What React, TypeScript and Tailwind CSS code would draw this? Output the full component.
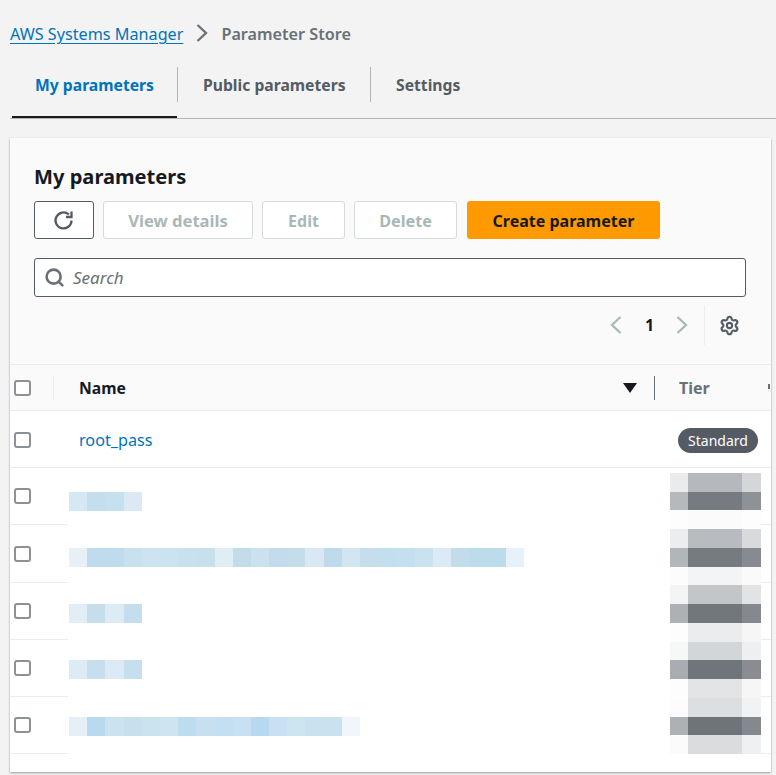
import { Search, Settings } from "lucide-react";

const font = "font-['Noto_Sans',sans-serif]";

// blurred name cells, one colour per mosaic block
const blurredRows = [
  { height: 57, box: 20, top: 24, cells: ["#d6e8f3", "#c4deee", "#c5e0ee", "#dce9f5"] },
  {
    height: 58,
    box: 21,
    top: 23,
    cells: [
      "#e6f0f5", "#c0dcec", "#bfdcee", "#c9e1ee", "#cde3f0", "#cbe2ef", "#c9e0ee", "#c8dfec",
      "#e0edf5", "#c2dcea", "#cbe1ee", "#c2dcec", "#c3ddeb", "#d9e8f2", "#bfdaeb", "#d2e5f1",
      "#c6deec", "#c2dfee", "#c4e0ef", "#c9e2f0", "#dbeaf4", "#c2dcea", "#bcdcec", "#bcdcec", "#e6f1f9",
    ],
  },
  { height: 57, box: 20, top: 21, cells: ["#e1eef7", "#c6deeb", "#dcebf4", "#c5deed"] },
  { height: 57, box: 20, top: 20, cells: ["#dcebf4", "#c6deee", "#dbeaf4", "#c5dfef"] },
  {
    height: 57,
    box: 20,
    top: 20,
    cells: [
      "#e6eff6", "#b9d9ee", "#cbe3f1", "#c6e0ee", "#cbe2ef", "#cfe4f1", "#bedcf0", "#c6e0f2",
      "#c4dff1", "#c8e1f2", "#b8d8f0", "#c7e1f3", "#cde4f1", "#c9e1f0", "#c9e2ef", "#f1f6fb",
    ],
  },
];

// blurred tier column: left, middle, right block per band
const tierBands = [
  ["#e9ebec", "#b5b9bd", "#d4d6d8", 19],
  ["#b4b9bb", "#767b82", "#8e9195", 18],
  ["#fdfdfd", "#fbfbfc", "#fdfdfd", 19],
  ["#ebedee", "#b8bcc0", "#d8dadc", 19],
  ["#b1b6b9", "#767b82", "#878a90", 19],
  ["#fcfcfd", "#f3f4f5", "#fafafb", 18],
  ["#f3f4f4", "#c3c6c8", "#e2e3e5", 19],
  ["#adb1b4", "#72777e", "#85888e", 19],
  ["#fdfdfd", "#ebecee", "#f6f6f7", 19],
  ["#f6f7f7", "#d3d6d8", "#eeeff1", 18],
  ["#a9adb2", "#70757c", "#8a8c91", 19],
  ["#fdfdfd", "#e2e4e6", "#f6f6f7", 19],
  ["#fcfcfc", "#dcdfe1", "#f1f2f3", 19],
  ["#aeb1b4", "#6f747b", "#85888d", 18],
  ["#fbfbfb", "#dadcde", "#eff0f2", 19],
] as const;

function Checkbox() {
  return <span className="block w-[17px] h-[16px] rounded-[3px] border-2 border-[#8d9096] bg-white" />;
}

function Chevron({ left, className }: { left?: boolean; className: string }) {
  return (
    <svg width="12" height="18" viewBox="0 0 12 18" fill="none" stroke="currentColor" strokeWidth="2.3" className={className}>
      <polyline points={left ? "10.5,1 2,9 10.5,17" : "1.5,1 10,9 1.5,17"} />
    </svg>
  );
}

function DisabledButton({ label, width, size }: { label: string; width: string; size: string }) {
  return (
    <button className={`${width} ${size} h-[38px] rounded-[3px] border border-[#d5dbdb] bg-white text-[#aab7b8] font-bold`}>
      {label}
    </button>
  );
}

export default function App() {
  return (
    <div className={`${font} w-[776px] h-[775px] overflow-hidden bg-[#f3f3f3] text-[16px]`}>
      {/* Breadcrumb */}
      <div className="h-[67px] pl-[10px] pt-[22px] flex items-start text-[16.2px]">
        <a className="text-[#0073bb] underline underline-offset-[3px] leading-[24px]">AWS Systems Manager</a>
        <Chevron className="ml-[13px] mt-[2px] text-[#687078]" />
        <span className="ml-[13px] text-[#687078] font-semibold leading-[24px]">Parameter Store</span>
      </div>

      {/* Tabs */}
      <div className="ml-[10px] h-[52px] border-b border-[#b0b4b6] flex items-start text-[15.7px]">
        <div className="ml-[2px] w-[165px] h-[51px] pl-[23px] pt-[6px] border-b-[2px] border-[#16191f] text-[#0073bb] font-bold leading-[24px]">
          My parameters
        </div>
        <div className="w-px h-[35px] bg-[#b0b4b6]" />
        <div className="w-[192px] pl-[25px] pt-[6px] text-[#545b64] font-bold leading-[24px]">Public parameters</div>
        <div className="w-px h-[35px] bg-[#b0b4b6]" />
        <div className="pl-[25px] pt-[6px] text-[#545b64] font-bold leading-[24px]">Settings</div>
      </div>

      {/* Card */}
      <div className="ml-[10px] mt-[19px] w-[761px] h-[634px] bg-white overflow-hidden shadow-[0_1px_2px_rgba(0,28,36,0.4)]">
        <div className="h-[227px] bg-[#fafafa] border-b border-[#eaeded] pl-[24px]">
          <h2 className="pt-[24px] text-[20.1px] leading-[30px] font-bold text-[#16191f]">My parameters</h2>
          <div className="mt-[9px] flex items-center">
            <button className="w-[60px] h-[38px] rounded-[3px] border border-[#545b64] bg-white flex items-center justify-center text-[#545b64]">
              <svg width="21" height="21" viewBox="0 0 21 21" fill="none" stroke="currentColor" strokeWidth="2.3" className="-ml-px">
                <path d="M18.5 10.5a8 8 0 1 1-2.6-6" />
                <path d="M18.5 1.5v5.5h-5.5" />
              </svg>
            </button>
            <div className="ml-[9px]"><DisabledButton label="View details" width="w-[150px] pt-[2px]" size="text-[16.6px]" /></div>
            <div className="ml-[9px]"><DisabledButton label="Edit" width="w-[83px] pt-px" size="text-[16px]" /></div>
            <div className="ml-[9px]"><DisabledButton label="Delete" width="w-[103px] pt-[2px]" size="text-[16.2px]" /></div>
            <button className="ml-[10px] w-[193px] h-[38px] pt-px rounded-[3px] bg-[#ff9900] text-[#16191f] font-bold">
              Create parameter
            </button>
          </div>
          <div className="mt-[19px] w-[712px] h-[39px] rounded-[3px] border border-[#545b64] bg-white flex items-center pl-[9px]">
            <Search size={21} strokeWidth={3} className="text-[#687078]" />
            <span className="ml-[8px] italic text-[#687078] text-[17px]">Search</span>
          </div>
          <div className="mt-[8px] flex items-center h-[40px]">
            <Chevron left className="ml-[576px] text-[#aab7b8]" />
            <span className="ml-[23px] w-[8px] font-bold text-[#16191f]">1</span>
            <Chevron className="ml-[23px] text-[#aab7b8]" />
            <div className="ml-[16px] w-px h-[40px] bg-[#eaeded]" />
            <Settings size={21} strokeWidth={2.4} className="ml-[14px] text-[#545b64]" />
          </div>
        </div>

        {/* Table head */}
        <div className="h-[46px] bg-[#fafafa] border-b border-[#eaeded] flex items-center relative">
          <div className="w-[44px] h-[25px] pl-[4px] flex items-center border-r border-[#eaeded]">
            <Checkbox />
          </div>
          <span className="ml-[25px] w-[544px] pt-[2px] font-bold text-[15.7px] text-[#16191f]">Name</span>
          <span className="w-0 h-0 border-x-[7px] border-x-transparent border-t-[10px] border-t-[#16191f]" />
          <div className="ml-[17px] w-px h-[24px] bg-[#687078]" />
          <span className="ml-[24px] font-bold text-[#687078]">Tier</span>
          <span className="absolute right-[1px] top-[19px] w-[2px] h-[5px] bg-[#687078]" />
        </div>

        {/* Rows */}
        <div className="relative">
          <div className="h-[57px] border-b border-[#eaeded] flex items-center">
            <div className="w-[58px] pl-[4px] mt-[2px]"><Checkbox /></div>
            <a className="ml-[11px] mt-[2px] text-[#0073bb] text-[16.2px]">root_pass</a>
            <span className="ml-auto mt-[2px] mr-[13px] w-[80px] h-[25px] text-center rounded-full bg-[#545b64] text-white text-[14px] leading-[25px]">
              Standard
            </span>
          </div>
          {blurredRows.map((row, i) => (
            <div key={i} className="flex" style={{ height: row.height }}>
              <div className="w-[58px] h-full pl-[4px] border-b border-[#eaeded]" style={{ paddingTop: row.box }}><Checkbox /></div>
              <div className="flex-1 pl-px flex items-start" style={{ paddingTop: row.top }}>
                {row.cells.map((c, j) => (
                  <span key={j} className="block w-[18.2px] h-[18.5px]" style={{ backgroundColor: c }} />
                ))}
              </div>
              <div className="w-[10px] h-full border-b border-[#eaeded]" />
            </div>
          ))}

          {/* Mosaic that hides the tier values */}
          <div className="absolute left-[660px] top-[62px] w-[91px]">
            {tierBands.map(([a, b, c, h], i) => (
              <div key={i} className="flex" style={{ height: h }}>
                <span className="w-[18px]" style={{ backgroundColor: a }} />
                <span className="w-[54px]" style={{ backgroundColor: b }} />
                <span className="w-[19px]" style={{ backgroundColor: c }} />
              </div>
            ))}
          </div>
        </div>
      </div>
    </div>
  );
}
